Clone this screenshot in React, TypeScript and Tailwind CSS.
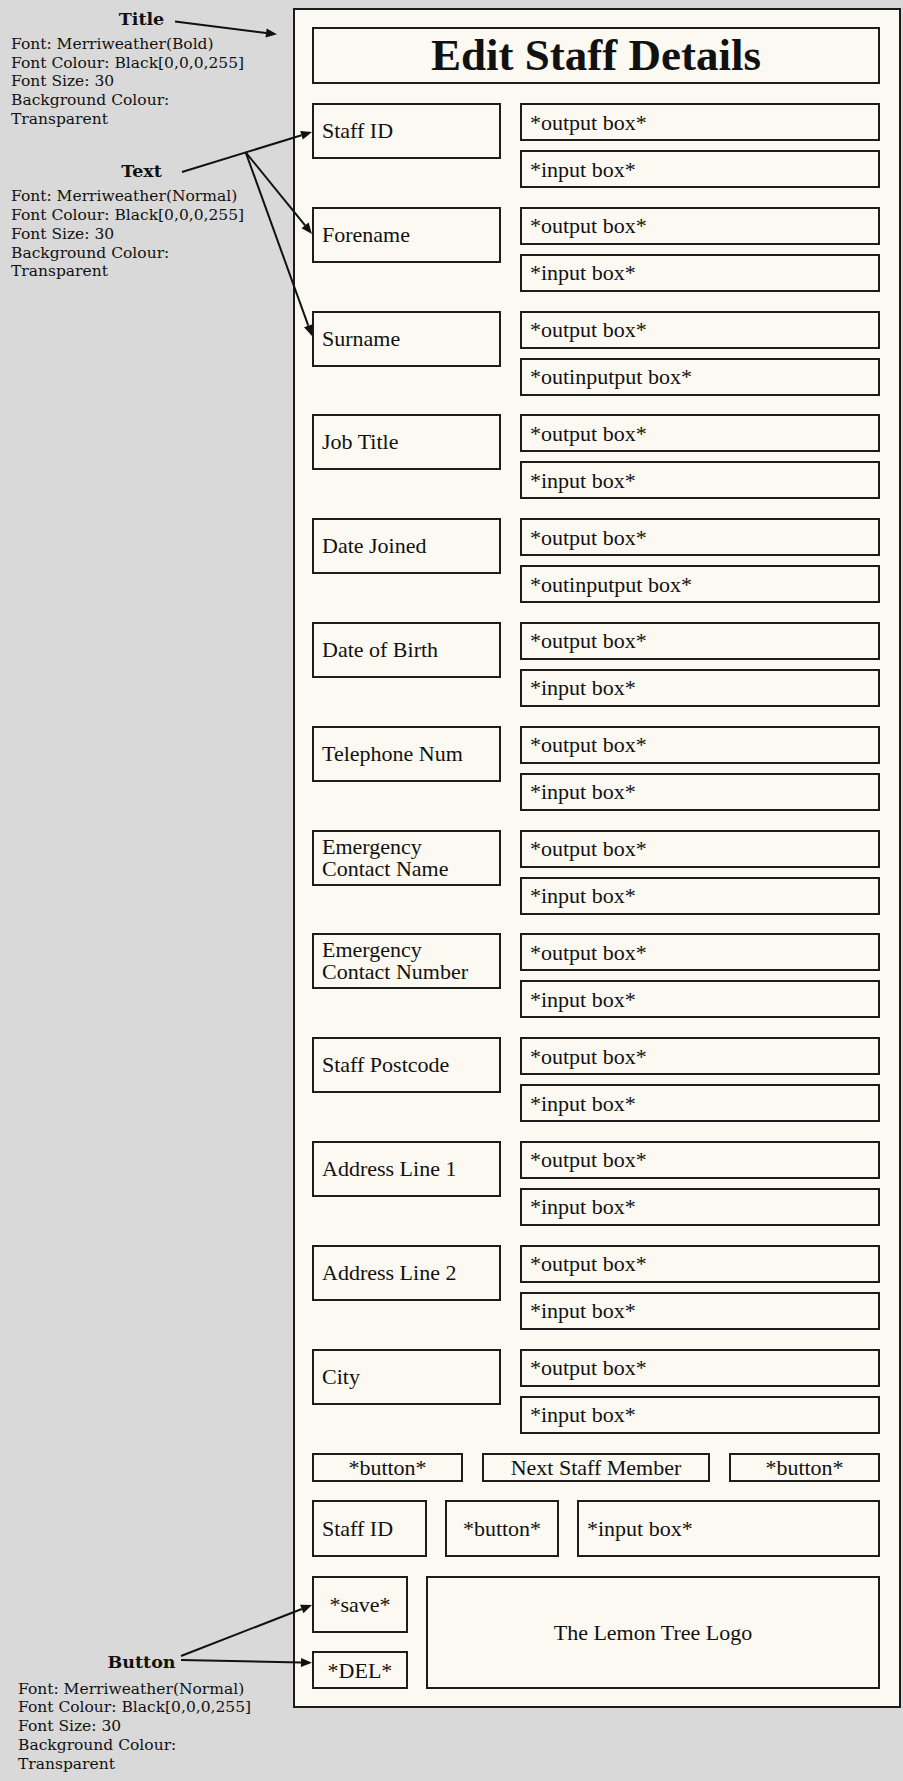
import React from 'react';

type Field = { label: string[]; input: string };

const fields: Field[] = [
  { label: ['Staff ID'], input: '*input box*' },
  { label: ['Forename'], input: '*input box*' },
  { label: ['Surname'], input: '*outinputput box*' },
  { label: ['Job Title'], input: '*input box*' },
  { label: ['Date Joined'], input: '*outinputput box*' },
  { label: ['Date of Birth'], input: '*input box*' },
  { label: ['Telephone Num'], input: '*input box*' },
  { label: ['Emergency', 'Contact Name'], input: '*input box*' },
  { label: ['Emergency', 'Contact Number'], input: '*input box*' },
  { label: ['Staff Postcode'], input: '*input box*' },
  { label: ['Address Line 1'], input: '*input box*' },
  { label: ['Address Line 2'], input: '*input box*' },
  { label: ['City'], input: '*input box*' },
];

const noteLines = (font: string) => [
  `Font: Merriweather(${font})`,
  'Font Colour: Black[0,0,0,255]',
  'Font Size: 30',
  'Background Colour:',
  'Transparent',
];

// annotation block on the left margin
const Note = ({ title, font, indent, gap }: { title: string; font: string; indent: string; gap: string }) => (
  <div>
    <div className="w-[283px] text-center text-[17.5px] leading-[22px] font-bold">{title}</div>
    <div className={`${indent} ${gap} text-[15.5px] leading-[18.75px]`}>
      {noteLines(font).map((l) => (
        <div key={l}>{l}</div>
      ))}
    </div>
  </div>
);

const box = 'border-2 border-[#1c1c1c] bg-[#fcf9f2]';

// arrow with filled head, drawn on the overlay
const Arrow = ({ x1, y1, x2, y2 }: { x1: number; y1: number; x2: number; y2: number }) => {
  const len = Math.hypot(x2 - x1, y2 - y1);
  const ux = (x2 - x1) / len;
  const uy = (y2 - y1) / len;
  const bx = x2 - ux * 11;
  const by = y2 - uy * 11;
  const pts = `${x2},${y2} ${bx - uy * 4.5},${by + ux * 4.5} ${bx + uy * 4.5},${by - ux * 4.5}`;
  return (
    <g>
      <line x1={x1} y1={y1} x2={bx} y2={by} stroke="#111" strokeWidth="2" />
      <polygon points={pts} fill="#111" />
    </g>
  );
};

const App: React.FC = () => {
  return (
    <div className="relative flex w-[903px] h-[1781px] bg-[#d9d9d9] text-[#111] [font-family:'DejaVu_Serif',serif]">
      {/* left notes */}
      <div className="flex flex-col w-[293px] shrink-0 h-full pt-[8px] pb-[7.6px]">
        <Note title="Title" font="Bold" indent="pl-[11px]" gap="mt-[4.8px]" />
        <div className="mt-[31.6px]">
          <Note title="Text" font="Normal" indent="pl-[11px]" gap="mt-[5.3px]" />
        </div>
        <div className="mt-auto">
          <Note title="Button" font="Normal" indent="pl-[18px]" gap="mt-[6.5px]" />
        </div>
      </div>

      {/* form panel */}
      <div className="mt-[8px] w-[608px] h-[1700px] border-2 border-[#1c1c1c] bg-[#fcf9f2] pl-[17px] pr-[19px] pt-[17px] flex flex-col text-[22px] [font-family:'Liberation_Serif',serif]">
        <div className={`${box} h-[57px] flex items-center justify-center text-[45px] font-bold leading-none`}>
          Edit Staff Details
        </div>

        <div className="mt-[19px] flex flex-col gap-[18.8px]">
          {fields.map((f) => (
            <div key={f.label.join(' ')} className="flex gap-[19px] h-[85px]">
              <div className={`${box} w-[189px] h-[56px] flex flex-col justify-center px-[8px] leading-[22px]`}>
                {f.label.map((l) => (
                  <div key={l}>{l}</div>
                ))}
              </div>
              <div className="flex-1 flex flex-col gap-[9px]">
                <div className={`${box} h-[38px] flex items-center px-[8px]`}>*output box*</div>
                <div className={`${box} h-[38px] flex items-center px-[8px]`}>{f.input}</div>
              </div>
            </div>
          ))}
        </div>

        <div className="mt-[19px] flex gap-[19px] h-[29px]">
          <div className={`${box} w-[151px] flex items-center justify-center`}>*button*</div>
          <div className={`${box} flex-1 flex items-center justify-center`}>Next Staff Member</div>
          <div className={`${box} w-[151px] flex items-center justify-center`}>*button*</div>
        </div>

        <div className="mt-[18.5px] flex gap-[18px] h-[57px]">
          <div className={`${box} w-[115px] flex items-center px-[8px]`}>Staff ID</div>
          <div className={`${box} w-[114px] flex items-center justify-center`}>*button*</div>
          <div className={`${box} flex-1 flex items-center px-[8px]`}>*input box*</div>
        </div>

        <div className="mt-[19px] flex gap-[18px] h-[113px]">
          <div className="w-[96px] flex flex-col gap-[18px]">
            <div className={`${box} h-[57px] flex items-center justify-center`}>*save*</div>
            <div className={`${box} h-[38px] flex items-center justify-center`}>*DEL*</div>
          </div>
          <div className={`${box} flex-1 flex items-center justify-center`}>The Lemon Tree Logo</div>
        </div>
      </div>

      {/* annotation arrows */}
      <svg className="absolute inset-0 pointer-events-none" width="903" height="1781" viewBox="0 0 903 1781">
        <Arrow x1={175} y1={21.5} x2={277} y2={34.3} />
        <Arrow x1={182} y1={172} x2={312} y2={132} />
        <Arrow x1={245.7} y1={152.3} x2={312} y2={234} />
        <Arrow x1={245.7} y1={152.3} x2={312} y2={336} />
        <Arrow x1={181} y1={1656} x2={312} y2={1605} />
        <Arrow x1={181} y1={1660} x2={312} y2={1662.7} />
      </svg>
    </div>
  );
};

export default App;
